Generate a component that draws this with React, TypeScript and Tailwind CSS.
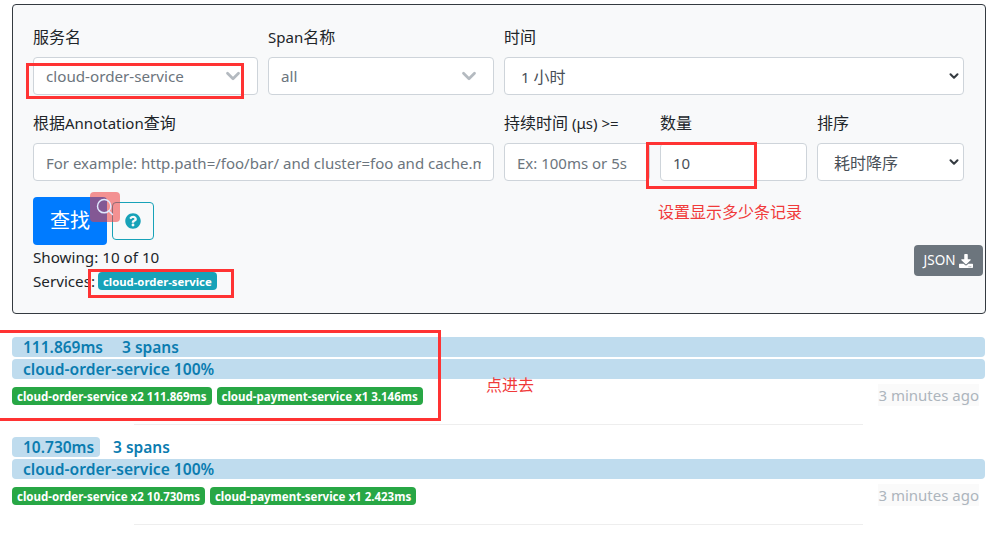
import { ChevronDown, Search } from "lucide-react"
import { FaDownload, FaQuestionCircle } from "react-icons/fa"

const font = { fontFamily: '"Noto Sans", "Noto Sans CJK SC", sans-serif' }

function Label({ children }: { children: React.ReactNode }) {
  return <label className="block h-[24px] mb-2 text-[15px] leading-[24px] whitespace-nowrap text-[#212529]">{children}</label>
}

// Chinese runs sit at 16px, latin is a bit smaller to keep the original widths
function Cjk({ children }: { children: React.ReactNode }) {
  return <span className="text-[16px]">{children}</span>
}

function ComboBox({ value }: { value: string }) {
  return (
    <div className="flex h-[38px] items-center justify-between rounded border border-[#ced4da] bg-white pl-[12px] pr-[13px]">
      <span className="pt-px text-[15.2px] text-[#6c757d]">{value}</span>
      <ChevronDown className="h-[22px] w-[22px] text-[#b4bac0]" strokeWidth={3} />
    </div>
  )
}

function NativeSelect({ children }: { children: React.ReactNode }) {
  return (
    <div className="flex h-[38px] items-center justify-between rounded border border-[#ced4da] bg-white pl-[16px] pr-[2px]">
      <span className="pt-px text-[15px] text-[#495057]">{children}</span>
      <ChevronDown className="h-[14px] w-[14px] text-[#343a40]" strokeWidth={3.5} />
    </div>
  )
}

function TextInput({ placeholder, value }: { placeholder?: string; value?: string }) {
  return (
    <input
      readOnly
      placeholder={placeholder}
      value={value}
      className="block h-[38px] w-full rounded border border-[#ced4da] bg-white px-[12px] pt-[2px] text-[15px] text-[#495057] outline-none placeholder:text-[#6c757d]"
    />
  )
}

function ServiceTag({ children }: { children: React.ReactNode }) {
  return (
    <span className="flex h-[18px] items-center rounded-[4px] bg-[#28a745] px-[5px] pt-px text-[11.5px] font-bold whitespace-nowrap text-white">
      {children}
    </span>
  )
}

interface TraceRowProps {
  duration: string
  durationWidth: string
  tags: string[]
}

function TraceRow({ duration, durationWidth, tags }: TraceRowProps) {
  return (
    <div className="h-[100px]">
      <div className="relative h-[20px] text-[15.5px] leading-[21px] font-semibold text-[#0b7cb0]">
        <div className={`h-full rounded bg-[#bfdcee] ${durationWidth}`} />
        <div className="absolute top-0 left-[11px] flex whitespace-pre">
          <span className="w-[99px]">{duration}</span>
          <span className={duration === "111.869ms" ? "ml-[0px]" : "ml-[-9px]"}>3 spans</span>
        </div>
      </div>
      <div className="mt-[2px] h-[20px] rounded bg-[#bfdcee] pl-[11px] text-[15.6px] leading-[21px] font-semibold text-[#0b7cb0]">
        cloud-order-service 100%
      </div>
      <div className="relative mt-[8px] flex gap-[5px]">
        {tags.map((t) => (
          <ServiceTag key={t}>{t}</ServiceTag>
        ))}
        <span className="absolute top-[-3px] right-[6px] bg-[#fafafa] text-[15px] leading-[22px] text-[#adb5bd]">
          3 minutes ago
        </span>
      </div>
      <div className="mt-[19px] ml-[122px] h-px w-[729px] bg-[#eeeeee]" />
    </div>
  )
}

export default function App() {
  return (
    <div style={font} className="relative h-[536px] w-[1003px] overflow-hidden bg-white pt-[4px]">
      {/* Search form */}
      <div className="ml-[12px] h-[310px] w-[974px] rounded border border-[#343a40] bg-[#f8f9fa] px-[20px] pt-[20px]">
        <div className="flex w-[931px] gap-[10px]">
          <div className="w-[225px]">
            <Label><Cjk>服务名</Cjk></Label>
            <ComboBox value="cloud-order-service" />
          </div>
          <div className="w-[226px]">
            <Label>Span<Cjk>名称</Cjk></Label>
            <ComboBox value="all" />
          </div>
          <div className="w-[460px]">
            <Label><Cjk>时间</Cjk></Label>
            <NativeSelect>1 <Cjk>小时</Cjk></NativeSelect>
          </div>
        </div>

        <div className="mt-[16px] flex w-[931px] gap-[10px]">
          <div className="w-[461px]">
            <Label><Cjk>根据</Cjk>Annotation<Cjk>查询</Cjk></Label>
            <TextInput placeholder="For example: http.path=/foo/bar/ and cluster=foo and cache.miss" />
          </div>
          <div className="w-[146px]">
            <Label><Cjk>持续时间</Cjk> (μs) &gt;=</Label>
            <TextInput placeholder="Ex: 100ms or 5s" />
          </div>
          <div className="w-[147px]">
            <Label><Cjk>数量</Cjk></Label>
            <TextInput value="10" />
          </div>
          <div className="w-[147px]">
            <Label><Cjk>排序</Cjk></Label>
            <NativeSelect><Cjk>耗时降序</Cjk></NativeSelect>
          </div>
        </div>

        <div className="mt-[16px] flex items-center gap-[5px]">
          <button className="h-[48px] w-[74px] rounded bg-[#007bff] text-[20px] text-white">查找</button>
          <button className="flex h-[38px] w-[42px] items-center justify-center rounded border border-[#17a2b8] text-[#17a2b8]">
            <FaQuestionCircle className="h-[16px] w-[16px]" />
          </button>
        </div>

        <div className="flex items-start justify-between">
          <div className="text-[15.2px] leading-[24px] text-[#212529]">
            <div>Showing: 10 of 10</div>
            <div className="flex items-center gap-[3px]">
              Services:
              <span className="flex h-[18px] items-center rounded-[4px] bg-[#17a2b8] px-[5px] pt-px text-[11.3px] font-bold text-white">
                cloud-order-service
              </span>
            </div>
          </div>
          <button className="mr-[-18px] flex h-[31px] w-[69px] items-center justify-center gap-[4px] rounded bg-[#6c757d] text-[13.5px] text-white">
            JSON <FaDownload className="h-[14px] w-[14px]" />
          </button>
        </div>
      </div>

      {/* Trace results */}
      <div className="mt-[23px] ml-[12px] w-[973px]">
        <TraceRow
          duration="111.869ms"
          durationWidth="w-full"
          tags={["cloud-order-service x2 111.869ms", "cloud-payment-service x1 3.146ms"]}
        />
        <TraceRow
          duration="10.730ms"
          durationWidth="w-[88px]"
          tags={["cloud-order-service x2 10.730ms", "cloud-payment-service x1 2.423ms"]}
        />
      </div>

      {/* Screenshot annotations */}
      <div className="absolute top-[63px] left-[26px] h-[36px] w-[218px] border-[3px] border-[#ff3333]" />
      <div className="absolute top-[142px] left-[646px] h-[47px] w-[111px] border-[3px] border-[#ff3333]" />
      <div className="absolute top-[269px] left-[88px] h-[29px] w-[146px] border-[3px] border-[#ff3333]" />
      <div className="absolute top-[330px] left-[-3px] h-[91px] w-[444px] border-[3px] border-[#ff3333]" />
      <span className="absolute top-[202px] left-[658px] text-[16px] leading-[20px] text-[#f03a3a]">设置显示多少条记录</span>
      <span className="absolute top-[375px] left-[486px] text-[16px] leading-[20px] text-[#f03a3a]">点进去</span>
      <div className="absolute top-[192px] left-[90px] flex h-[30px] w-[30px] items-center justify-center rounded-[4px] bg-[#ee3c3c]/55">
        <Search className="h-[20px] w-[20px] text-[#dfe9ff]" strokeWidth={1.75} />
      </div>
    </div>
  )
}
